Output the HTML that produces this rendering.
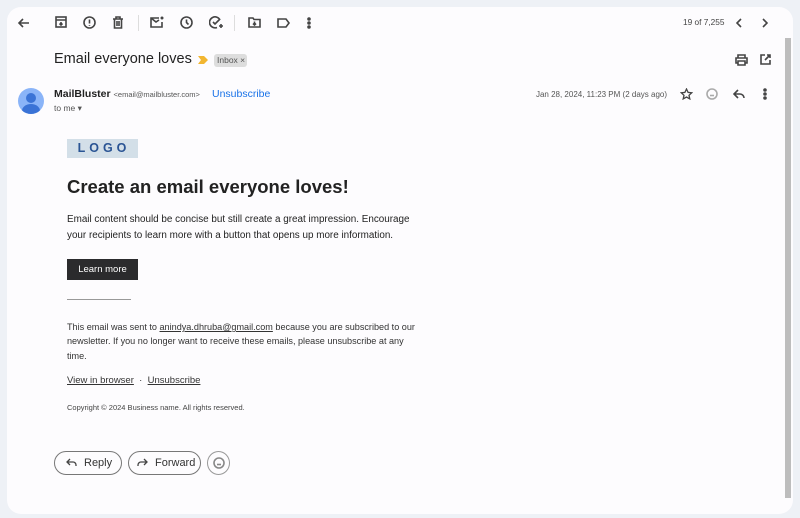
<!DOCTYPE html>
<html><head><style>
*{margin:0;padding:0;box-sizing:border-box}
body{width:800px;height:518px;background:#eef1f6;font-family:"Liberation Sans",sans-serif;position:relative;overflow:hidden;color:#222}
.card{position:absolute;left:7px;top:7px;width:786px;height:507px;background:#fdfcfe;border-radius:14px}
.a{position:absolute;white-space:nowrap}
svg{position:absolute;fill:none;stroke:#444;stroke-width:1.6}
.sb{position:absolute;left:785px;top:38px;width:6px;height:460px;background:#bdbdbd}
.btn{position:absolute;border:1px solid #777;border-radius:13px;height:24px;font-size:11px;color:#333;line-height:22px}
</style></head><body>
<div class="card"></div>
<div class="sb"></div>
<!-- toolbar -->
<svg style="left:17px;top:16px" width="14" height="14" viewBox="0 0 14 14"><path d="M12 7H2M6 3L2 7l4 4"/></svg>
<svg style="left:55px;top:16px" width="12" height="12" viewBox="0 0 12 12"><rect x="1" y="1" width="10" height="10"/><path d="M1 4h10M6 6v3M4.5 7.5L6 9l1.5-1.5"/></svg>
<svg style="left:83px;top:16px" width="13" height="13" viewBox="0 0 13 13"><circle cx="6.5" cy="6.5" r="5.5"/><path d="M6.5 3.5v4M6.5 9v.8"/></svg>
<svg style="left:112px;top:16px" width="12" height="13" viewBox="0 0 12 13"><path d="M1 3h10M4 3V1h4v2M2.5 3v9h7V3M5 5v5M7 5v5"/></svg>
<div class="a" style="left:138px;top:15px;width:1px;height:16px;background:#ddd"></div>
<svg style="left:150px;top:16px" width="14" height="12" viewBox="0 0 14 12"><path d="M9 2H1v9h11V6M1 2l5 4 3-2"/><circle cx="12" cy="2" r="1.5" fill="#444" stroke="none"/></svg>
<svg style="left:180px;top:16px" width="13" height="13" viewBox="0 0 13 13"><circle cx="6.5" cy="6.5" r="5.5"/><path d="M6.5 3.5v3l2 2"/></svg>
<svg style="left:209px;top:16px" width="14" height="13" viewBox="0 0 14 13"><path d="M11 4A5.5 5.5 0 1 0 8 11.5M4 6l2 2 5-5M10 10h4M12 8v4"/></svg>
<div class="a" style="left:234px;top:15px;width:1px;height:16px;background:#ddd"></div>
<svg style="left:248px;top:17px" width="13" height="11" viewBox="0 0 13 11"><path d="M1 1h4l1 1.5h6V10H1zM6.5 4.5v3.5M5 6.5l1.5 1.5 1.5-1.5"/></svg>
<svg style="left:277px;top:18px" width="13" height="10" viewBox="0 0 13 10"><path d="M1 1h8l3 4-3 4H1z"/></svg>
<svg style="left:307px;top:17px" width="4" height="12" viewBox="0 0 4 12"><circle cx="2" cy="2" r="1" fill="#444"/><circle cx="2" cy="6" r="1" fill="#444"/><circle cx="2" cy="10" r="1" fill="#444"/></svg>
<div class="a" style="left:683px;top:17px;font-size:8.3px;color:#444">19 of 7,255</div>
<svg style="left:736px;top:18px" width="6" height="10" viewBox="0 0 6 10"><path d="M5 1L1 5l4 4"/></svg>
<svg style="left:762px;top:18px" width="6" height="10" viewBox="0 0 6 10"><path d="M1 1l4 4-4 4"/></svg>
<!-- subject -->
<div class="a" style="left:54px;top:51px;font-size:14.5px;color:#222">Email everyone loves</div>
<svg style="left:198px;top:56px" width="10" height="8" viewBox="0 0 10 8"><path d="M0 0h6l4 4-4 4H0l3-4z" fill="#f2b631" stroke="none"/></svg>
<div class="a" style="left:214px;top:54px;width:33px;height:13px;background:#ddd;border-radius:3px;font-size:8.5px;color:#555;line-height:13px;padding-left:3px">Inbox ×</div>
<svg style="left:735px;top:54px" width="13" height="12" viewBox="0 0 13 12"><path d="M3 4V1h7v3M3 9H1V4h11v5h-2M3 7h7v4H3z"/></svg>
<svg style="left:760px;top:54px" width="11" height="11" viewBox="0 0 11 11"><path d="M5 1H1v9h9V6M7 1h3v3M10 1L5 6"/></svg>
<!-- sender -->
<div class="a" style="left:18px;top:88px;width:26px;height:26px;border-radius:50%;background:#8ab4f8;overflow:hidden"><div class="a" style="left:8px;top:5px;width:10px;height:10px;border-radius:50%;background:#3a73d6"></div><div class="a" style="left:4px;top:16px;width:18px;height:14px;border-radius:50%;background:#3a73d6"></div></div>
<div class="a" style="left:54px;top:88px;font-size:10.5px;font-weight:bold;color:#222">MailBluster <span style="font-weight:normal;font-size:7.5px;color:#555">&lt;email@mailbluster.com&gt;</span></div>
<div class="a" style="left:212px;top:88px;font-size:10.5px;color:#1a73e8">Unsubscribe</div>
<div class="a" style="left:54px;top:103px;font-size:8.5px;color:#555">to me ▾</div>
<div class="a" style="right:133px;top:90px;font-size:8px;color:#555">Jan 28, 2024, 11:23 PM (2 days ago)</div>
<svg style="left:680px;top:88px" width="13" height="12" viewBox="0 0 13 12"><path d="M6.5 1l1.6 3.4 3.6.4-2.7 2.5.8 3.6-3.3-1.9-3.3 1.9.8-3.6L1.3 4.8l3.6-.4z" stroke-width="1.3"/></svg>
<svg style="left:706px;top:88px" width="12" height="12" viewBox="0 0 12 12"><circle cx="6" cy="6" r="5" stroke="#aaa"/><path d="M4 7.5h4" stroke="#aaa"/></svg>
<svg style="left:733px;top:89px" width="12" height="10" viewBox="0 0 12 10"><path d="M5 1L1 5l4 4M1 5h6a4 4 0 0 1 4 4"/></svg>
<svg style="left:763px;top:88px" width="4" height="12" viewBox="0 0 4 12"><circle cx="2" cy="2" r="1" fill="#444"/><circle cx="2" cy="6" r="1" fill="#444"/><circle cx="2" cy="10" r="1" fill="#444"/></svg>
<!-- body -->
<div class="a" style="left:67px;top:139px;width:71px;height:19px;background:#d3dfe8;color:#2a5494;font-weight:bold;font-size:12.5px;letter-spacing:4px;text-align:center;line-height:19px;padding-left:3px">LOGO</div>
<div class="a" style="left:67px;top:176px;font-size:18.5px;font-weight:bold;color:#222">Create an email everyone loves!</div>
<div class="a" style="left:67px;top:212px;font-size:9.9px;line-height:16px;color:#222">Email content should be concise but still create a great impression. Encourage<br>your recipients to learn more with a button that opens up more information.</div>
<div class="a" style="left:67px;top:259px;width:71px;height:21px;background:#2b2b2d;color:#fff;font-size:9.5px;text-align:center;line-height:21px">Learn more</div>
<div class="a" style="left:67px;top:299px;width:64px;height:1px;background:#999"></div>
<div class="a" style="left:67px;top:320px;font-size:9.1px;line-height:14.3px;color:#333">This email was sent to <u>anindya.dhruba@gmail.com</u> because you are subscribed to our<br>newsletter. If you no longer want to receive these emails, please unsubscribe at any<br>time.</div>
<div class="a" style="left:67px;top:375px;font-size:9.5px;color:#333"><u>View in browser</u> &nbsp;·&nbsp; <u>Unsubscribe</u></div>
<div class="a" style="left:67px;top:403px;font-size:7.5px;color:#444">Copyright © 2024 Business name. All rights reserved.</div>
<!-- actions -->
<div class="btn" style="left:54px;top:451px;width:68px;padding-left:29px">Reply</div>
<svg style="left:66px;top:458px" width="11" height="9" viewBox="0 0 11 9"><path d="M4 1L1 4l3 3M1 4h6a3 3 0 0 1 3 3v1" stroke-width="1.3"/></svg>
<div class="btn" style="left:128px;top:451px;width:73px;padding-left:26px">Forward</div>
<svg style="left:137px;top:458px" width="11" height="9" viewBox="0 0 11 9"><path d="M7 1l3 3-3 3M10 4H4a3 3 0 0 0-3 3v1" stroke-width="1.3"/></svg>
<div class="a" style="left:207px;top:451px;width:23px;height:24px;border:1px solid #999;border-radius:50%"></div>
<svg style="left:213px;top:457px" width="12" height="12" viewBox="0 0 12 12"><circle cx="6" cy="6" r="5" stroke="#888"/><path d="M4 7.5h4" stroke="#888"/></svg>
</body></html>
